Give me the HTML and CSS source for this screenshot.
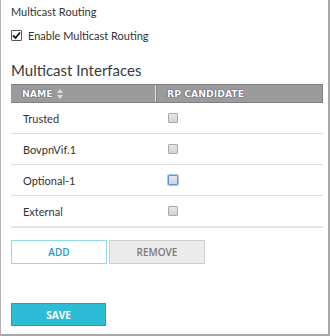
FILE: index.html
```html
<!DOCTYPE html>
<html lang="en">
<head>
    <meta charset="UTF-8">
    <title>Multicast Routing</title>
    <link rel="stylesheet" href="styles.css">
</head>
<body>
    <div class="panel">
        <div class="section-label">Multicast Routing</div>

        <label class="check-row">
            <span class="check-box checked">
                <svg width="9" height="9" viewBox="0 0 9 9"><path d="M1 4.5 L3.5 7 L8 1.5" fill="none" stroke="#111" stroke-width="1.8"/></svg>
            </span>
            Enable Multicast Routing
        </label>

        <h2 class="section-title">Multicast Interfaces</h2>

        <div class="grid">
            <div class="grid-head">
                <div class="th th-name">NAME
                    <svg class="sort" width="6" height="10" viewBox="0 0 6 10"><path d="M3 0 L6 4 L0 4 Z M0 6 L6 6 L3 10 Z" fill="#ddd"/></svg>
                </div>
                <div class="th">RP CANDIDATE</div>
            </div>
            <div class="grid-row"><div class="td">Trusted</div><div class="td"><span class="cb"></span></div></div>
            <div class="grid-row"><div class="td">BovpnVif.1</div><div class="td"><span class="cb"></span></div></div>
            <div class="grid-row"><div class="td">Optional-1</div><div class="td"><span class="cb focus"></span></div></div>
            <div class="grid-row last"><div class="td">External</div><div class="td"><span class="cb"></span></div></div>
        </div>

        <div class="btn-row">
            <button class="btn btn-add">ADD</button>
            <button class="btn btn-remove">REMOVE</button>
        </div>

        <button class="btn btn-save">SAVE</button>
    </div>
</body>
</html>
```

FILE: styles.css
```css
body { margin: 0; }
.panel { width: 330px; height: 336px; box-sizing: border-box; border-left: 1px solid #b4b4b4; border-right: 2px solid #a8a8a8; border-bottom: 2px solid #a8a8a8; padding: 4px 5px 0 10px; font-family: Lato, "Open Sans", sans-serif; font-size: 11px; color: #333; background: #fff; }
.section-label { line-height: 16px; font-size: 11px; }
.check-row { display: flex; align-items: center; gap: 6px; margin-top: 8px; height: 14px; font-size: 11px; }
.check-box { width: 9px; height: 9px; border: 1px solid #555; background: #fff; display: flex; align-items: center; justify-content: center; border-radius: 1px; }
.section-title { margin: 17px 0 0; font-family: Lato, "Open Sans", sans-serif; font-size: 15px; font-weight: normal; line-height: 22px; color: #3a3a3a; }
.grid { margin-top: 3px; width: 312px; }
.grid-head { display: grid; grid-template-columns: 145px 1fr; height: 19px; background: #9b9b9b; border-top: 1px solid #7f7f7f; border-bottom: 1px solid #7f7f7f; border-right: 1px solid #7f7f7f; box-sizing: border-box; }
.th { display: flex; align-items: center; gap: 3px; padding-left: 11px; font-family: "DejaVu Sans", Verdana, sans-serif; font-weight: bold; font-size: 9.3px; color: #fff; text-shadow: 0 0 1px #3c3c6a, 0 0 1px #3c3c6a; }
.th-name { border-right: 1px solid #e0e0e0; box-shadow: 1px 0 0 #888; }
.sort { margin-left: 1px; }
.grid-row { display: grid; grid-template-columns: 145px 1fr; height: 31px; border-bottom: 1px solid #dcdcdc; box-sizing: border-box; }
.grid-row.last { border-bottom: 2px solid #e6e6e6; height: 32px; }
.td { display: flex; align-items: center; padding-left: 12px; }
.cb { width: 8px; height: 8px; border: 1px solid #a9a9a9; border-radius: 1px; background: linear-gradient(#e6e6e6, #d4d4d4); }
.cb.focus { border-color: #5b95e0; box-shadow: 0 0 0 1px #a9c8f0; }
.btn-row { display: flex; gap: 2px; margin-top: 12px; }
.btn { width: 96px; height: 24px; box-sizing: border-box; font-family: "Open Sans", sans-serif; font-size: 10px; font-weight: 600; padding: 0; cursor: pointer; }
.btn-add { background: #fff; border: 1px solid #8fdbea; color: #2a98c4; }
.btn-remove { background: #ebebeb; border: 1px solid #cfcfcf; color: #7a7a7a; }
.btn-save { display: block; margin-top: 39px; width: 95px; height: 23px; background: #2dbcd6; border: 1px solid #1aa3bd; color: #fff; font-weight: bold; }
```
